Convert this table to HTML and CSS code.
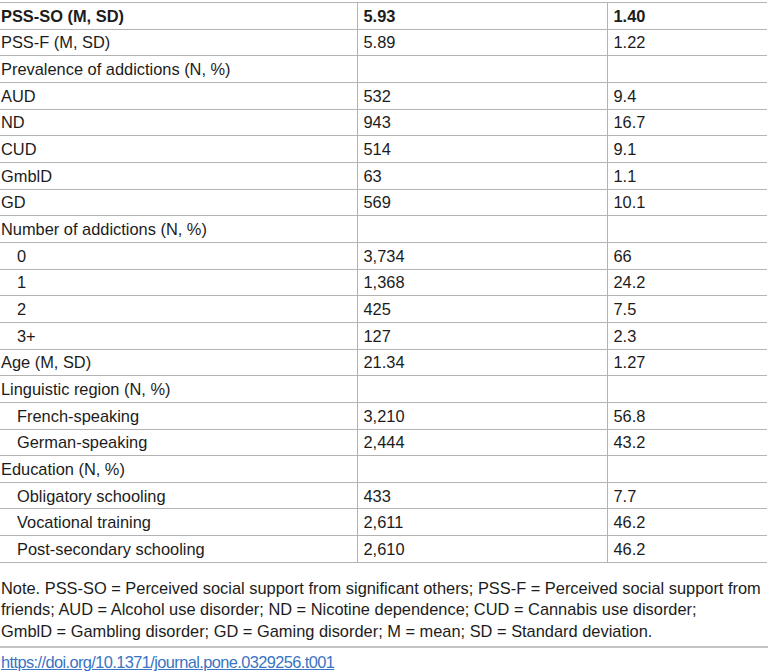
FILE: index.html
```html
<!DOCTYPE html>
<html lang="en">
<head>
    <meta charset="UTF-8">
    <title>Table 1</title>
    <link rel="stylesheet" href="styles.css">
</head>
<body>
    <div class="table-wrap">
        <table class="data-table">
            <colgroup>
                <col class="col-label">
                <col class="col-n">
                <col class="col-pct">
            </colgroup>
            <tbody>
                <tr class="head-row"><td>PSS-SO (M, SD)</td><td>5.93</td><td>1.40</td></tr>
                <tr><td>PSS-F (M, SD)</td><td>5.89</td><td>1.22</td></tr>
                <tr><td>Prevalence of addictions (N, %)</td><td></td><td></td></tr>
                <tr><td>AUD</td><td>532</td><td>9.4</td></tr>
                <tr><td>ND</td><td>943</td><td>16.7</td></tr>
                <tr><td>CUD</td><td>514</td><td>9.1</td></tr>
                <tr><td>GmblD</td><td>63</td><td>1.1</td></tr>
                <tr><td>GD</td><td>569</td><td>10.1</td></tr>
                <tr><td>Number of addictions (N, %)</td><td></td><td></td></tr>
                <tr><td class="sub">0</td><td>3,734</td><td>66</td></tr>
                <tr><td class="sub">1</td><td>1,368</td><td>24.2</td></tr>
                <tr><td class="sub">2</td><td>425</td><td>7.5</td></tr>
                <tr><td class="sub">3+</td><td>127</td><td>2.3</td></tr>
                <tr><td>Age (M, SD)</td><td>21.34</td><td>1.27</td></tr>
                <tr><td>Linguistic region (N, %)</td><td></td><td></td></tr>
                <tr><td class="sub">French-speaking</td><td>3,210</td><td>56.8</td></tr>
                <tr><td class="sub">German-speaking</td><td>2,444</td><td>43.2</td></tr>
                <tr><td>Education (N, %)</td><td></td><td></td></tr>
                <tr><td class="sub">Obligatory schooling</td><td>433</td><td>7.7</td></tr>
                <tr><td class="sub">Vocational training</td><td>2,611</td><td>46.2</td></tr>
                <tr><td class="sub">Post-secondary schooling</td><td>2,610</td><td>46.2</td></tr>
            </tbody>
        </table>
    </div>

    <div class="table-note">
        <p>Note. PSS-SO = Perceived social support from significant others; PSS-F = Perceived social support from friends; AUD = Alcohol use disorder; ND = Nicotine dependence; CUD = Cannabis use disorder; GmblD&nbsp;= Gambling disorder; GD = Gaming disorder; M = mean; SD = Standard deviation.</p>
    </div>

    <div class="doi">
        <a href="#">https://doi.org/10.1371/journal.pone.0329256.t001</a>
    </div>
</body>
</html>
```

FILE: styles.css
```css
* {
    box-sizing: border-box;
}

body {
    margin: 0;
    background: #fff;
    color: #1c1c1c;
    font-family: 'Liberation Sans', Arial, sans-serif;
    font-size: 16.4px;
}

.table-wrap {
    width: 767px;
    padding-top: 2px;
}

.data-table {
    width: 100%;
    border-collapse: collapse;
    table-layout: fixed;
}

.col-label {
    width: 357px;
}

.col-n {
    width: 250px;
}

.data-table td {
    height: 26.67px;
    padding: 0 6px;
    border-top: 1px solid #b3b3b3;
    border-bottom: 1px solid #b3b3b3;
    line-height: 18px;
    vertical-align: middle;
    white-space: nowrap;
}

.data-table td:first-child {
    padding-left: 1px;
}

.data-table td + td {
    border-left: 1px solid #b3b3b3;
}

.data-table td.sub {
    padding-left: 17px;
}

.head-row td {
    font-weight: bold;
}

.table-note {
    width: 768px;
    padding: 15px 0 4px 1px;
    line-height: 21.5px;
    border-bottom: 2px solid #c4c4c4;
}

.table-note p {
    margin: 0;
    max-width: 764px;
}

.doi {
    padding: 4px 0 0 1px;
    line-height: 20px;
}

.doi a {
    color: #3a74c4;
    letter-spacing: -0.6px;
}
```
